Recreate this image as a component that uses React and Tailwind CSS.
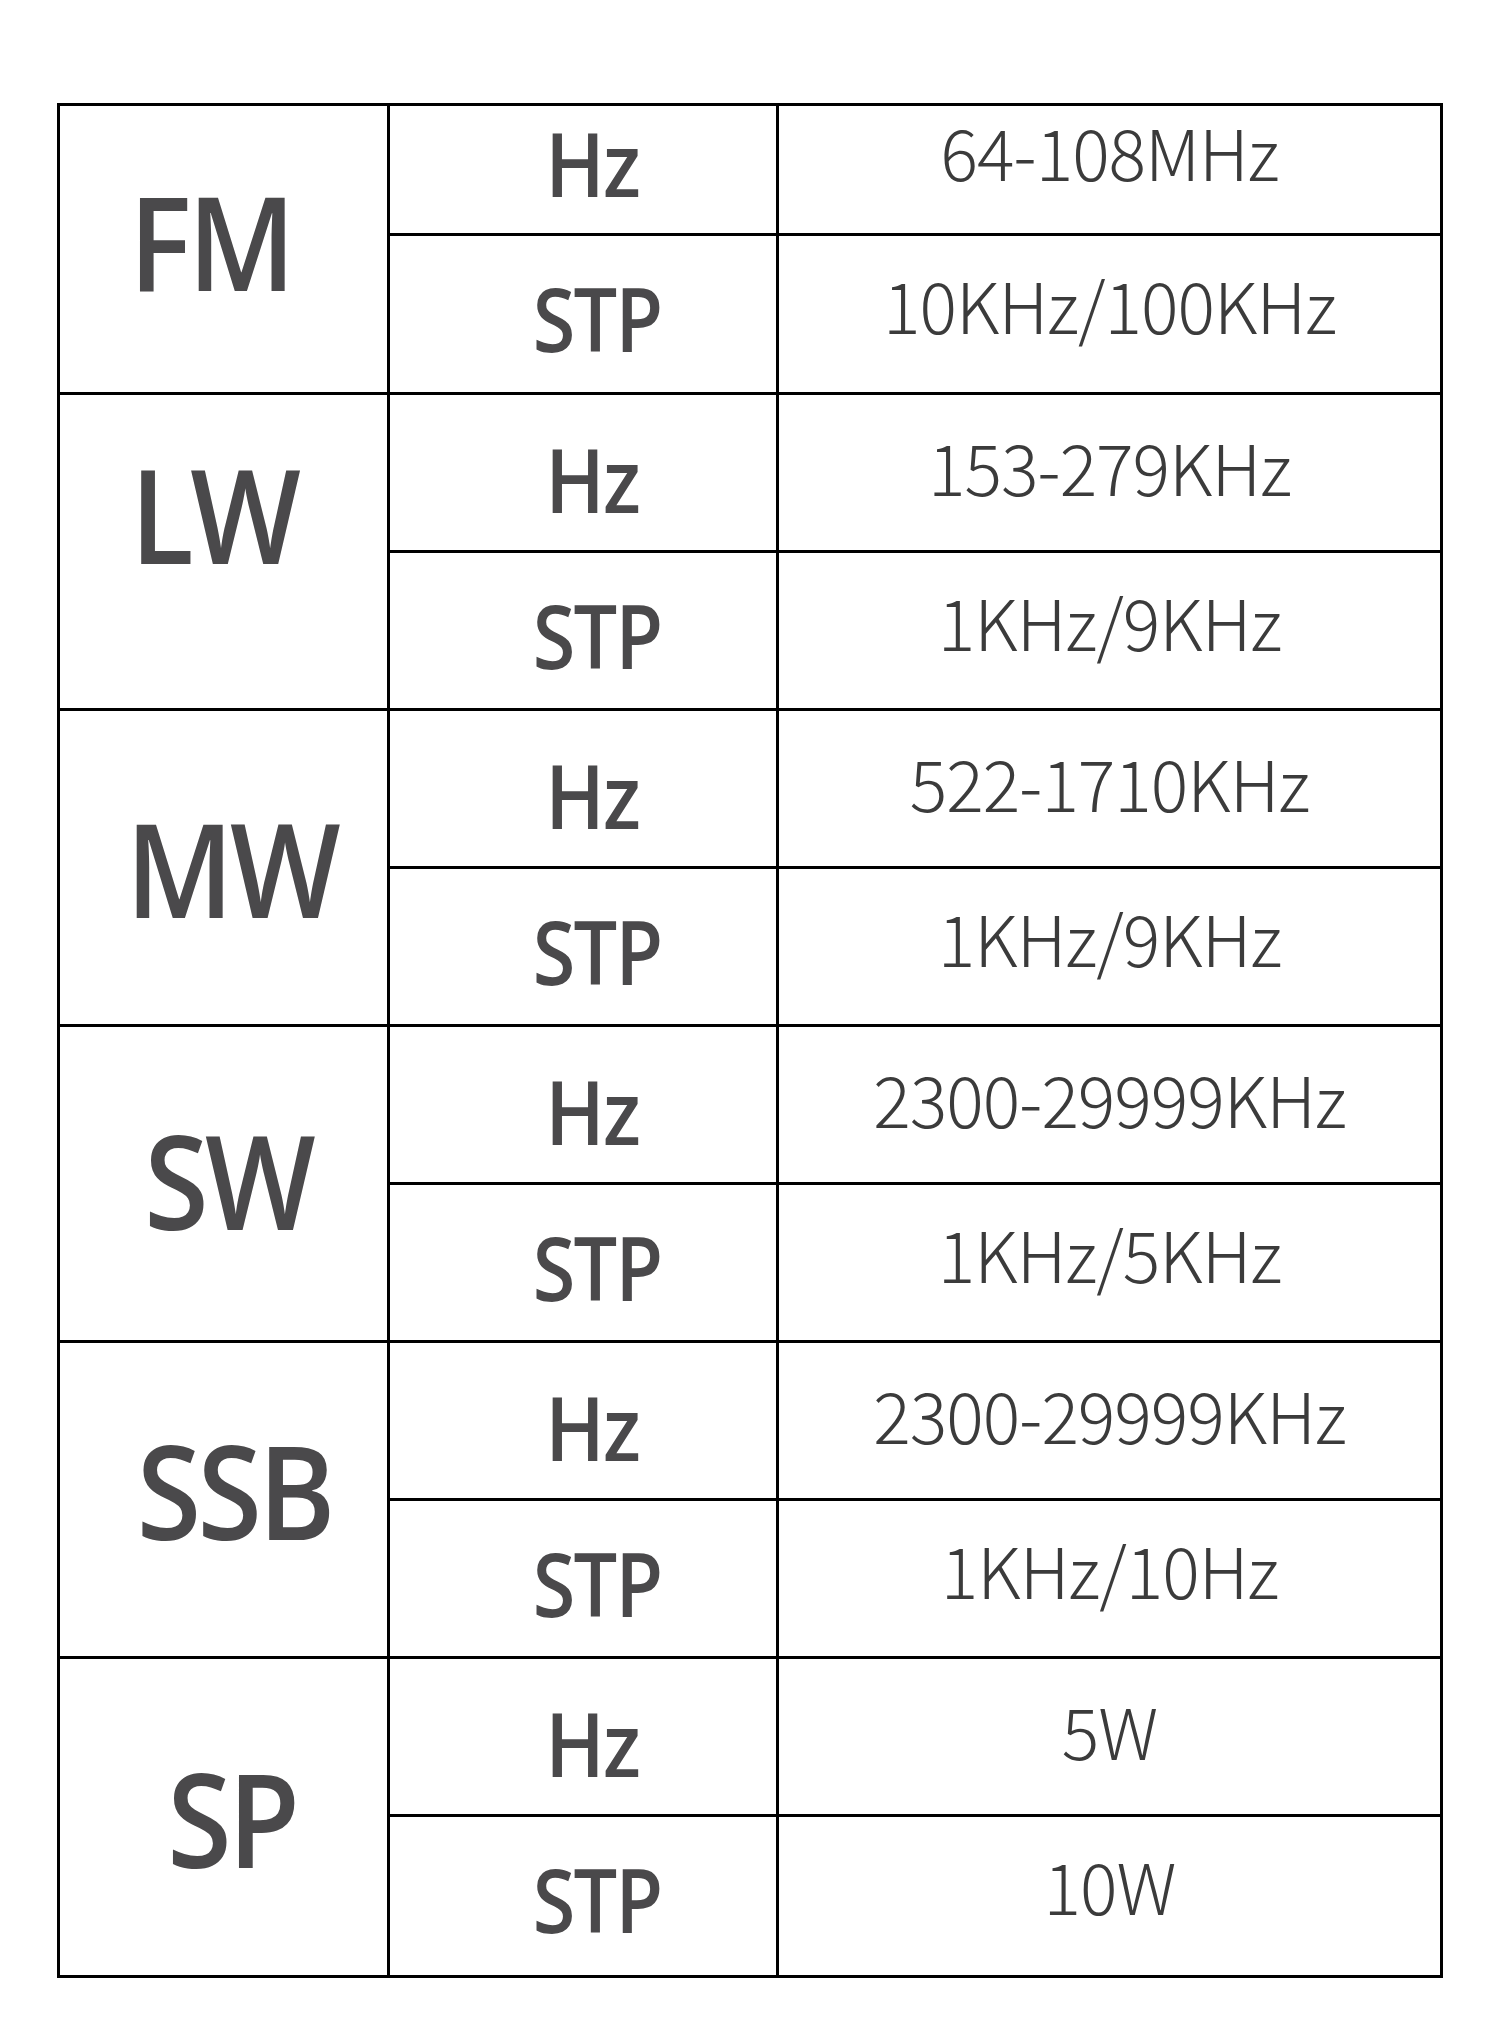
const bands = [
  {
    name: "FM",
    first: true,
    label: "pt-[70px] pr-[26px]",
    hz: "64-108MHz",
    stp: "10KHz/100KHz",
  },
  { name: "LW", label: "pt-[54px] pr-[20px]", hz: "153-279KHz", stp: "1KHz/9KHz" },
  { name: "MW", label: "pt-[92px] pl-[16px]", hz: "522-1710KHz", stp: "1KHz/9KHz" },
  { name: "SW", label: "pt-[88px] pl-[10px]", hz: "2300-29999KHz", stp: "1KHz/5KHz" },
  { name: "SSB", label: "pt-[82px] pl-[22px]", hz: "2300-29999KHz", stp: "1KHz/10Hz" },
  { name: "SP", label: "pt-[94px] pl-[16px]", hz: "5W", stp: "10W", last: true },
];

const labelFont = { fontFamily: '"Open Sans", "Noto Sans", sans-serif' };
const valueFont = { fontFamily: '"Noto Sans CJK SC", "Noto Sans", sans-serif' };

function Band({ band }) {
  return (
    <div
      className={`flex ${band.first ? "h-[289px]" : "h-[316px]"} ${
        band.last ? "" : "border-b-[3px] border-black"
      }`}
    >
      {/* band name */}
      <div
        className={`w-[330px] shrink-0 border-r-[3px] border-black flex justify-center ${band.label}`}
      >
        <span
          className="inline-block h-fit scale-x-90 text-[130px] leading-none font-semibold text-[#4a494b] tracking-[-4px]"
          style={labelFont}
        >
          {band.name}
        </span>
      </div>

      {/* Hz / STP rows */}
      <div className="flex-1 flex flex-col">
        <div
          className={`flex border-b-[3px] border-black ${
            band.first ? "h-[130px]" : "h-[158px]"
          }`}
        >
          <div
            className={`w-[389px] shrink-0 border-r-[3px] border-black flex justify-center pl-[18px] ${
              band.first ? "pt-[13px]" : "pt-[40px]"
            }`}
          >
            <span
              className="inline-block h-fit scale-x-90 text-[88px] leading-none font-semibold text-[#4a494b] tracking-[-2px]"
              style={labelFont}
            >
              Hz
            </span>
          </div>
          <div
            className={`flex-1 flex justify-center ${
              band.first ? "pt-[10px]" : "pt-[36px]"
            }`}
          >
            <span
              className="text-[70px] leading-none font-light text-[#3b3b3b] tracking-[-1px]"
              style={valueFont}
            >
              {band.hz}
            </span>
          </div>
        </div>
        <div className="flex flex-1">
          <div className="w-[389px] shrink-0 border-r-[3px] border-black flex justify-center pl-[28px] pt-[38px]">
            <span
              className="inline-block h-fit scale-x-[0.88] text-[88px] leading-none font-semibold text-[#4a494b] tracking-[-2px]"
              style={labelFont}
            >
              STP
            </span>
          </div>
          <div className="flex-1 flex justify-center pt-[33px]">
            <span
              className="text-[70px] leading-none font-light text-[#3b3b3b] tracking-[-1px]"
              style={valueFont}
            >
              {band.stp}
            </span>
          </div>
        </div>
      </div>
    </div>
  );
}

export default function App() {
  return (
    <div className="w-[1500px] h-[2033px] bg-white pt-[103px] pl-[57px]">
      <div className="w-[1386px] border-[3px] border-black">
        {bands.map((band) => (
          <Band key={band.name} band={band} />
        ))}
      </div>
    </div>
  );
}
